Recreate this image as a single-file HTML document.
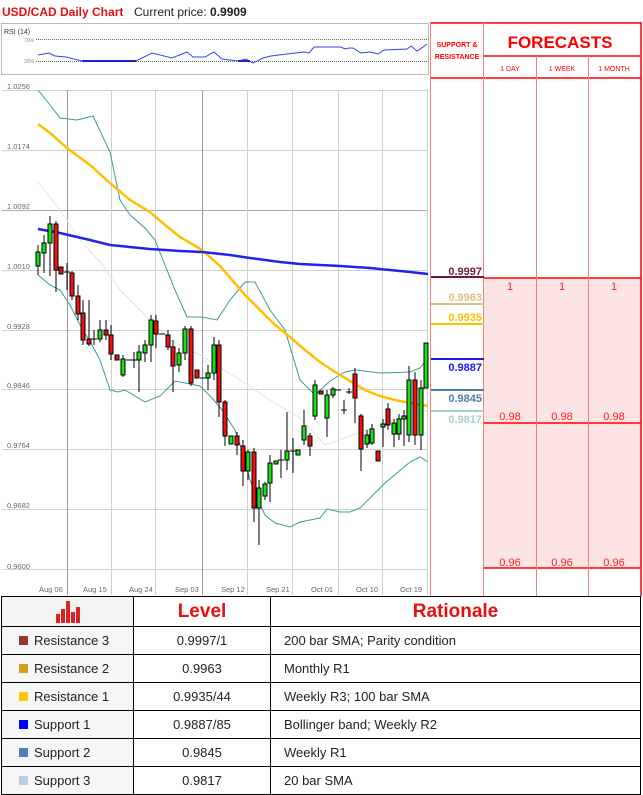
<!DOCTYPE html>
<html><head><meta charset="utf-8"><style>
body{margin:0;width:643px;height:793px;background:#fff;position:relative;overflow:hidden;font-family:"Liberation Sans",sans-serif}
.abs{position:absolute}
table{border-collapse:collapse;table-layout:fixed}
td{border:1px solid #000;font-size:13px;color:#222;height:27px;padding:0;line-height:14px}
</style></head><body>
<div class="abs" style="left:2px;top:5px;font-size:12px;font-weight:bold;color:#e31010;white-space:nowrap">USD/CAD Daily Chart</div>
<div class="abs" style="left:134px;top:5px;font-size:12px;color:#222;white-space:nowrap">Current price: <b>0.9909</b></div>

<svg class="abs" style="left:0;top:0" width="643" height="600">
<rect x="1.5" y="23.5" width="427" height="51" fill="#fff" stroke="#bbb"/>
<text x="4" y="34" font-size="7" fill="#333" font-family="Liberation Sans">RSI (14)</text>
<text x="24" y="42" font-size="5" fill="#888" font-family="Liberation Sans">70%</text>
<text x="24" y="63" font-size="5" fill="#888" font-family="Liberation Sans">30%</text>
<line x1="36" y1="39.5" x2="428" y2="39.5" stroke="#666" stroke-dasharray="1,1"/>
<line x1="36" y1="61.5" x2="428" y2="61.5" stroke="#666" stroke-dasharray="1,1"/>
<polyline fill="none" stroke="#3344ee" stroke-width="1" points="38,55 49,53 55,56 66,57 82,61 136,61 152,53 172,58 187,52 193,57 205,57 214,52 222,59 238,61 246,59 253,63 263,58 271,56 287,54 304,52 309,53 314,47 329,47 341,47 345,49 349,48 353,48 361,53 370,52 378,54 384,50 407,49 411,46 417,51 423,47 427,44"/>
<polyline fill="none" stroke="#2222cc" stroke-width="2" points="82,61 136,61"/>
<polyline fill="none" stroke="#2222cc" stroke-width="2" points="238,61 250,61"/>
<g stroke="#d0d0d0" stroke-width="1">
<line x1="2" y1="90.5" x2="428" y2="90.5"/><line x1="2" y1="150.5" x2="428" y2="150.5"/><line x1="2" y1="210.5" x2="428" y2="210.5" stroke="#aaa"/><line x1="2" y1="270.5" x2="428" y2="270.5"/><line x1="2" y1="330.5" x2="428" y2="330.5"/><line x1="2" y1="389.5" x2="428" y2="389.5"/><line x1="2" y1="449.5" x2="428" y2="449.5"/><line x1="2" y1="509.5" x2="428" y2="509.5"/><line x1="2" y1="569.5" x2="428" y2="569.5"/>
<line x1="67.5" y1="90" x2="67.5" y2="595" stroke="#999"/><line x1="111.5" y1="90" x2="111.5" y2="595"/><line x1="155.5" y1="90" x2="155.5" y2="595"/><line x1="202.5" y1="90" x2="202.5" y2="595" stroke="#999"/><line x1="247.5" y1="90" x2="247.5" y2="595"/><line x1="292.5" y1="90" x2="292.5" y2="595"/><line x1="338.5" y1="90" x2="338.5" y2="595"/><line x1="382.5" y1="90" x2="382.5" y2="595"/><line x1="427.5" y1="90" x2="427.5" y2="595"/>
</g>
<g font-size="7.5" fill="#666" font-family="Liberation Sans">
<text x="7" y="89">1.0256</text><text x="7" y="149">1.0174</text><text x="7" y="209">1.0092</text><text x="7" y="269">1.0010</text><text x="7" y="329">0.9928</text><text x="7" y="388">0.9846</text><text x="7" y="448">0.9764</text><text x="7" y="508">0.9682</text><text x="7" y="569">0.9600</text>
<text x="39" y="592">Aug 06</text><text x="83" y="592">Aug 15</text><text x="129" y="592">Aug 24</text><text x="175" y="592">Sep 03</text><text x="221" y="592">Sep 12</text><text x="266" y="592">Sep 21</text><text x="311" y="592">Oct 01</text><text x="356" y="592">Oct 10</text><text x="400" y="592">Oct 19</text>
</g>
<polyline fill="none" stroke="#e4e4e4" stroke-width="1" points="38,182 60,210 80,240 100,262 120,290 140,310 170,340 200,355 240,380 270,400 300,418 325,445 350,436 380,425 410,414 428,410"/>
<polyline fill="none" stroke="#3a9a9a" stroke-width="1" points="38,90 50,105 60,118 77,120 93,116 110,152 120,200 130,215 145,228 155,240 165,265 175,290 187,317 202,317 217,320 230,300 245,282 255,282 270,310 285,330 300,380 315,395 330,381 345,372 355,370 380,373 410,372 420,368 428,358"/>
<polyline fill="none" stroke="#3a9a9a" stroke-width="1" points="38,275 50,285 60,290 70,305 80,325 92,345 100,360 110,390 118,392 125,390 145,402 160,396 175,381 190,384 200,386 212,398 222,410 235,430 242,450 250,480 258,500 265,515 275,523 290,527 300,522 320,518 327,509 340,512 350,512 360,508 385,483 410,462 420,457 428,462"/>
<polyline fill="none" stroke="#ffc000" stroke-width="2.5" points="38,124 50,133 67,148 90,165 110,183 130,200 150,212 165,225 180,237 202,250 220,266 245,295 262,312 275,325 290,337 305,350 320,362 335,372 350,381 365,390 380,396 395,400 410,403 428,406"/>
<polyline fill="none" stroke="#2222ee" stroke-width="2.5" points="38,229 60,233 90,240 110,245 150,249 180,251 202,252 230,255 250,258 280,262 300,264 340,266 370,268 390,270 410,272 428,274"/>
<g stroke="#000" stroke-width="1">
<line x1="38" y1="245" x2="38" y2="275"/><rect x="36" y="252" width="4" height="14" fill="#16e016"/>
<line x1="44" y1="235" x2="44" y2="273"/><rect x="42" y="243" width="4" height="10" fill="#16e016"/>
<line x1="50" y1="216" x2="50" y2="276"/><rect x="48" y="224" width="4" height="19" fill="#16e016"/>
<line x1="56" y1="221" x2="56" y2="292"/><rect x="54" y="224" width="4" height="46" fill="#ee1111"/>
<rect x="59" y="267" width="4" height="7" fill="#ee1111"/>
<line x1="67" y1="263" x2="67" y2="290"/><line x1="64" y1="272" x2="70" y2="272"/>
<line x1="72" y1="271" x2="72" y2="300"/><rect x="70" y="273" width="4" height="23" fill="#ee1111"/>
<line x1="78" y1="285" x2="78" y2="320"/><rect x="76" y="296" width="4" height="18" fill="#ee1111"/>
<line x1="83" y1="300" x2="83" y2="345"/><rect x="81" y="313" width="4" height="27" fill="#ee1111"/>
<line x1="89" y1="300" x2="89" y2="346"/><rect x="87" y="339" width="4" height="5" fill="#ee1111"/>
<line x1="94" y1="330" x2="94" y2="345"/><line x1="91" y1="339" x2="97" y2="339"/>
<line x1="100" y1="320" x2="100" y2="342"/><rect x="98" y="330" width="4" height="9" fill="#16e016"/>
<line x1="106" y1="320" x2="106" y2="340"/><rect x="104" y="330" width="4" height="5" fill="#ee1111"/>
<line x1="111" y1="325" x2="111" y2="360"/><rect x="109" y="335" width="4" height="19" fill="#ee1111"/>
<rect x="115" y="355" width="4" height="5" fill="#ee1111"/>
<line x1="123" y1="355" x2="123" y2="377"/><rect x="121" y="359" width="4" height="16" fill="#16e016"/>
<line x1="126" y1="360" x2="132" y2="360"/><line x1="131" y1="360" x2="137" y2="360"/><line x1="134" y1="352" x2="134" y2="368"/>
<line x1="139" y1="345" x2="139" y2="392"/><rect x="137" y="352" width="4" height="8" fill="#16e016"/>
<line x1="145" y1="340" x2="145" y2="362"/><rect x="143" y="345" width="4" height="8" fill="#16e016"/>
<line x1="151" y1="315" x2="151" y2="362"/><rect x="149" y="320" width="4" height="25" fill="#16e016"/>
<line x1="156" y1="315" x2="156" y2="348"/><rect x="154" y="321" width="4" height="13" fill="#ee1111"/>
<line x1="159" y1="334" x2="165" y2="334"/>
<line x1="168" y1="330" x2="168" y2="350"/><rect x="166" y="335" width="4" height="12" fill="#ee1111"/>
<line x1="173" y1="340" x2="173" y2="392"/><rect x="171" y="347" width="4" height="19" fill="#ee1111"/>
<line x1="179" y1="348" x2="179" y2="372"/><rect x="177" y="353" width="4" height="12" fill="#16e016"/>
<line x1="185" y1="326" x2="185" y2="360"/><rect x="183" y="329" width="4" height="24" fill="#16e016"/>
<line x1="191" y1="326" x2="191" y2="386"/><rect x="189" y="329" width="4" height="54" fill="#ee1111"/>
<rect x="195" y="370" width="4" height="8" fill="#ee1111"/>
<line x1="200" y1="378" x2="206" y2="378"/>
<line x1="208" y1="365" x2="208" y2="390"/><rect x="206" y="373" width="4" height="5" fill="#16e016"/>
<line x1="214" y1="337" x2="214" y2="380"/><rect x="212" y="345" width="4" height="28" fill="#16e016"/>
<line x1="219" y1="340" x2="219" y2="417"/><rect x="217" y="345" width="4" height="57" fill="#ee1111"/>
<line x1="225" y1="400" x2="225" y2="446"/><rect x="223" y="402" width="4" height="34" fill="#ee1111"/>
<rect x="229" y="436" width="4" height="8" fill="#16e016"/>
<line x1="237" y1="432" x2="237" y2="455"/><rect x="235" y="436" width="4" height="9" fill="#ee1111"/>
<line x1="243" y1="440" x2="243" y2="486"/><rect x="241" y="446" width="4" height="25" fill="#ee1111"/>
<line x1="248" y1="450" x2="248" y2="480"/><rect x="246" y="452" width="4" height="19" fill="#16e016"/>
<line x1="254" y1="448" x2="254" y2="522"/><rect x="252" y="452" width="4" height="56" fill="#ee1111"/>
<line x1="259" y1="480" x2="259" y2="545"/><rect x="257" y="488" width="4" height="20" fill="#16e016"/>
<line x1="265" y1="482" x2="265" y2="500"/><rect x="263" y="484" width="4" height="12" fill="#16e016"/>
<line x1="270" y1="455" x2="270" y2="502"/><rect x="268" y="463" width="4" height="20" fill="#16e016"/>
<rect x="274" y="461" width="4" height="3" fill="#16e016"/>
<line x1="281" y1="450" x2="281" y2="478"/><line x1="278" y1="460" x2="284" y2="460"/>
<line x1="287" y1="412" x2="287" y2="470"/><rect x="285" y="451" width="4" height="9" fill="#16e016"/>
<line x1="293" y1="438" x2="293" y2="473"/><line x1="290" y1="451" x2="296" y2="451"/>
<rect x="296" y="450" width="4" height="5" fill="#16e016"/>
<line x1="304" y1="410" x2="304" y2="445"/><rect x="302" y="426" width="4" height="14" fill="#16e016"/>
<line x1="310" y1="433" x2="310" y2="456"/><rect x="308" y="436" width="4" height="10" fill="#ee1111"/>
<line x1="315" y1="380" x2="315" y2="420"/><rect x="313" y="385" width="4" height="31" fill="#16e016"/>
<rect x="319" y="391" width="4" height="3" fill="#ee1111"/>
<line x1="327" y1="390" x2="327" y2="437"/><rect x="325" y="395" width="4" height="23" fill="#16e016"/>
<line x1="333" y1="387" x2="333" y2="398"/><rect x="331" y="389" width="4" height="6" fill="#16e016"/>
<line x1="335" y1="390" x2="341" y2="390"/>
<line x1="344" y1="400" x2="344" y2="414"/><line x1="341" y1="410" x2="347" y2="410"/>
<line x1="349" y1="388" x2="349" y2="394"/><line x1="346" y1="392" x2="352" y2="392"/>
<line x1="355" y1="368" x2="355" y2="423"/><rect x="353" y="374" width="4" height="24" fill="#ee1111"/>
<line x1="361" y1="414" x2="361" y2="471"/><rect x="359" y="416" width="4" height="33" fill="#ee1111"/>
<line x1="367" y1="430" x2="367" y2="448"/><rect x="365" y="435" width="4" height="9" fill="#16e016"/>
<line x1="372" y1="424" x2="372" y2="445"/><rect x="370" y="429" width="4" height="14" fill="#16e016"/>
<rect x="376" y="451" width="4" height="10" fill="#ee1111"/>
<line x1="383" y1="419" x2="383" y2="447"/><rect x="381" y="424" width="4" height="3" fill="#16e016"/>
<line x1="388" y1="403" x2="388" y2="430"/><rect x="386" y="409" width="4" height="16" fill="#ee1111"/>
<line x1="394" y1="419" x2="394" y2="447"/><rect x="392" y="423" width="4" height="11" fill="#16e016"/>
<line x1="399" y1="414" x2="399" y2="440"/><rect x="397" y="419" width="4" height="15" fill="#16e016"/>
<line x1="404" y1="410" x2="404" y2="446"/><rect x="402" y="416" width="4" height="3" fill="#16e016"/>
<line x1="409" y1="366" x2="409" y2="442"/><rect x="407" y="380" width="4" height="55" fill="#16e016"/>
<line x1="415" y1="372" x2="415" y2="445"/><rect x="413" y="380" width="4" height="55" fill="#ee1111"/>
<line x1="421" y1="380" x2="421" y2="450"/><rect x="419" y="388" width="4" height="47" fill="#16e016"/>
<rect x="424" y="343" width="4" height="45" fill="#16e016"/>
</g>
<rect x="484" y="278" width="157" height="290" fill="#fde4e4"/>
<g stroke="#ff0000" stroke-width="1.5">
<line x1="430" y1="23" x2="641" y2="23"/>
<line x1="641" y1="22" x2="641" y2="596"/>
<line x1="483.5" y1="56" x2="641" y2="56"/>
<line x1="430" y1="78" x2="641" y2="78"/>
<line x1="484" y1="278" x2="641" y2="278"/>
<line x1="484" y1="423" x2="641" y2="423"/>
<line x1="484" y1="568" x2="641" y2="568"/>
</g>
<g stroke="#f08080" stroke-width="1">
<line x1="430.5" y1="23" x2="430.5" y2="596"/>
<line x1="483.5" y1="23" x2="483.5" y2="596"/>
<line x1="536.5" y1="56" x2="536.5" y2="596"/>
<line x1="588.5" y1="56" x2="588.5" y2="596"/>
</g>
<g font-family="Liberation Sans" font-weight="bold" fill="#ff0000" text-anchor="middle">
<text x="457" y="47" font-size="7">SUPPORT &amp;</text>
<text x="457" y="59" font-size="7">RESISTANCE</text>
<text x="560" y="48" font-size="17">FORECASTS</text>
<text x="510" y="71" font-size="7" font-weight="normal">1 DAY</text>
<text x="562" y="71" font-size="7" font-weight="normal">1 WEEK</text>
<text x="614" y="71" font-size="7" font-weight="normal">1 MONTH</text>
</g>
<g font-family="Liberation Sans" font-size="11" fill="#ff2020" text-anchor="middle">
<text x="510" y="290">1</text><text x="562" y="290">1</text><text x="614" y="290">1</text>
<text x="510" y="420">0.98</text><text x="562" y="420">0.98</text><text x="614" y="420">0.98</text>
<text x="510" y="566">0.96</text><text x="562" y="566">0.96</text><text x="614" y="566">0.96</text>
</g>
<g stroke-width="2">
<line x1="431" y1="277" x2="484" y2="277" stroke="#6b1c3c"/>
<line x1="431" y1="304" x2="484" y2="304" stroke="#e0c080"/>
<line x1="431" y1="324" x2="484" y2="324" stroke="#ffc000"/>
<line x1="431" y1="359" x2="484" y2="359" stroke="#1a1aee"/>
<line x1="431" y1="390" x2="484" y2="390" stroke="#4a7fa8"/>
<line x1="431" y1="411" x2="484" y2="411" stroke="#a8d0d0"/>
</g>
<g font-family="Liberation Sans" font-size="11" font-weight="bold" text-anchor="end">
<text x="482" y="275" fill="#6b1c3c">0.9997</text>
<text x="482" y="301" fill="#e0c080">0.9963</text>
<text x="482" y="321" fill="#ffc000">0.9935</text>
<text x="482" y="371" fill="#1a1aee">0.9887</text>
<text x="482" y="402" fill="#4a7fa8">0.9845</text>
<text x="482" y="423" fill="#a8d0d0">0.9817</text>
</g>
</svg>

<table class="abs" style="left:1px;top:596px;width:640px">
<tr><td style="width:131px;height:29px;text-align:center;background:#f4f4f4">
<svg width="26" height="22" viewBox="0 0 26 22" style="vertical-align:middle"><g fill="#dd2222"><rect x="1" y="13" width="4" height="9"/><rect x="6" y="8" width="4" height="14"/><rect x="11" y="0" width="4" height="22"/><rect x="16" y="11" width="4" height="11"/><rect x="21" y="6" width="4" height="16"/></g></svg></td>
<td style="width:136px;text-align:center;font-size:19px;font-weight:bold;color:#e31010">Level</td>
<td style="text-align:center;font-size:19px;font-weight:bold;color:#e31010">Rationale</td></tr>
<tr><td style="background:#f6f6f6;padding-left:17px"><span style="display:inline-block;width:9px;height:9px;background:#953735;margin-right:6px"></span>Resistance 3</td><td style="text-align:center">0.9997/1</td><td style="padding-left:13px">200 bar SMA; Parity condition</td></tr>
<tr><td style="background:#f6f6f6;padding-left:17px"><span style="display:inline-block;width:9px;height:9px;background:#d4a017;margin-right:6px"></span>Resistance 2</td><td style="text-align:center">0.9963</td><td style="padding-left:13px">Monthly R1</td></tr>
<tr><td style="background:#f6f6f6;padding-left:17px"><span style="display:inline-block;width:9px;height:9px;background:#ffc800;margin-right:6px"></span>Resistance 1</td><td style="text-align:center">0.9935/44</td><td style="padding-left:13px">Weekly R3; 100 bar SMA</td></tr>
<tr><td style="background:#f6f6f6;padding-left:17px"><span style="display:inline-block;width:9px;height:9px;background:#0000ff;margin-right:6px"></span>Support 1</td><td style="text-align:center">0.9887/85</td><td style="padding-left:13px">Bollinger band; Weekly R2</td></tr>
<tr><td style="background:#f6f6f6;padding-left:17px"><span style="display:inline-block;width:9px;height:9px;background:#4f81bd;margin-right:6px"></span>Support 2</td><td style="text-align:center">0.9845</td><td style="padding-left:13px">Weekly R1</td></tr>
<tr><td style="background:#f6f6f6;padding-left:17px"><span style="display:inline-block;width:9px;height:9px;background:#b9cde5;margin-right:6px"></span>Support 3</td><td style="text-align:center">0.9817</td><td style="padding-left:13px">20 bar SMA</td></tr>
</table>
</body></html>
